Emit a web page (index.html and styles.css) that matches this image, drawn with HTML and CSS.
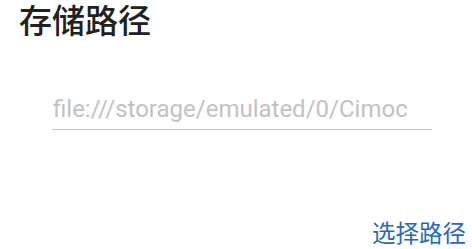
FILE: index.html
```html
<!DOCTYPE html>
<html lang="zh">
<head>
<meta charset="utf-8">
<link rel="stylesheet" href="styles.css">
</head>
<body>
<div class="dialog">
  <h1 class="title">存储路径</h1>
  <div class="field">
    <div class="field-text">file:///storage/emulated/0/Cimoc</div>
  </div>
  <div class="actions">
    <span class="btn">选择路径</span>
  </div>
</div>
</body>
</html>
```
FILE: styles.css
```css
html, body {
  margin: 0;
  padding: 0;
  background: #ffffff;
}
.dialog {
  width: 472px;
  height: 249px;
  display: flex;
  flex-direction: column;
  box-sizing: border-box;
}
.title {
  margin: 0;
  padding: 0 0 0 19px;
  font-family: "Noto Sans CJK SC", "Noto Sans", sans-serif;
  font-weight: 500;
  font-size: 33px;
  line-height: 38px;
  color: #212121;
}
.field {
  margin: 57px 0 0 52px;
  width: 380px;
  border-bottom: 1px solid #c4c4c4;
  padding-bottom: 6px;
}
.field-text {
  padding-left: 1px;
  font-family: Roboto, "Liberation Sans", sans-serif;
  font-size: 24px;
  line-height: 28px;
  color: #c2c2c2;
  white-space: nowrap;
}
.actions {
  margin-top: auto;
  display: flex;
  justify-content: flex-end;
  padding: 0 6px 3px 0;
}
.btn {
  font-family: "Noto Sans CJK SC", sans-serif;
  font-size: 23.5px;
  line-height: 28px;
  color: #2368c4;
}
```
